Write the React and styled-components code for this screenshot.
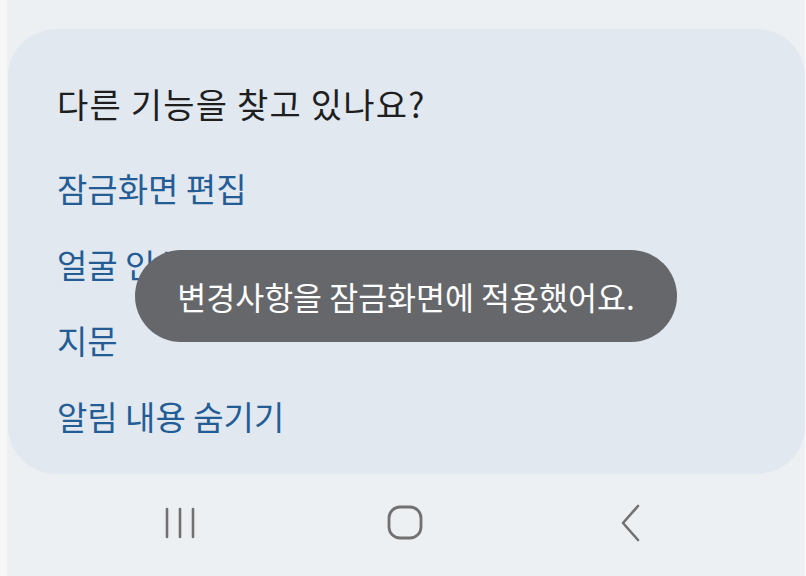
import styled, { createGlobalStyle } from "styled-components";

const GlobalStyle = createGlobalStyle`
  html, body {
    margin: 0;
    padding: 0;
    background: #f7f7f7;
  }
  body {
    font-family: "Noto Sans CJK KR", "Noto Sans", sans-serif;
  }
`;

const links = ["잠금화면 편집", "얼굴 인식", "지문", "알림 내용 숨기기"];

export default function App() {
  return (
    <>
      <GlobalStyle />
      <StyledScreen>
        <StyledCard>
          <StyledTitle>다른 기능을 찾고 있나요?</StyledTitle>
          <StyledLinkList>
            {links.map((label) => (
              <StyledLink key={label}>{label}</StyledLink>
            ))}
          </StyledLinkList>
        </StyledCard>

        <StyledNavBar>
          <StyledNavSlot>
            <svg width="34" height="34" viewBox="0 0 34 34">
              <g stroke="#717171" strokeWidth="2.6" strokeLinecap="round">
                <line x1="3" y1="3" x2="3" y2="31" />
                <line x1="16" y1="3" x2="16" y2="31" />
                <line x1="29" y1="3" x2="29" y2="31" />
              </g>
            </svg>
          </StyledNavSlot>
          <StyledNavSlot>
            <svg width="38" height="36" viewBox="0 0 38 36">
              <rect
                x="2"
                y="2"
                width="32"
                height="31"
                rx="11"
                fill="none"
                stroke="#717171"
                strokeWidth="2.8"
              />
            </svg>
          </StyledNavSlot>
          <StyledNavSlot>
            <svg width="24" height="38" viewBox="0 0 24 38">
              <polyline
                points="19,2 4,19 19,36"
                fill="none"
                stroke="#717171"
                strokeWidth="2.6"
                strokeLinecap="round"
                strokeLinejoin="round"
              />
            </svg>
          </StyledNavSlot>
        </StyledNavBar>

        <StyledToast>변경사항을 잠금화면에 적용했어요.</StyledToast>
      </StyledScreen>
    </>
  );
}

const StyledScreen = styled.div`
  position: relative;
  box-sizing: border-box;
  margin-left: 7px;
  width: 799px;
  height: 576px;
  padding-top: 29px;
  background: #edf0f3;
  border-right: 1px solid #fafafa;
  display: flex;
  flex-direction: column;
`;

const StyledCard = styled.section`
  box-sizing: border-box;
  margin-left: 1px;
  height: 445px;
  padding: 55px 40px 0 49px;
  background: #e1e8f0;
  border-radius: 48px;
`;

const StyledTitle = styled.h2`
  margin: 0;
  height: 40px;
  line-height: 40px;
  font-size: 34px;
  letter-spacing: 1.2px;
  font-weight: 400;
  color: #1e1e1e;
`;

const StyledLinkList = styled.div`
  display: flex;
  flex-direction: column;
  gap: 36px;
  margin-top: 44px;
`;

const StyledLink = styled.a`
  display: block;
  height: 40px;
  line-height: 40px;
  font-size: 33px;
  color: #245d95;
`;

const StyledNavBar = styled.nav`
  flex: 1;
  display: flex;
  justify-content: center;
  align-items: center;
  padding-bottom: 4px;
`;

const StyledNavSlot = styled.div`
  width: 225px;
  display: flex;
  justify-content: center;
  align-items: center;
`;

const StyledToast = styled.div`
  position: absolute;
  top: 250px;
  left: 50%;
  transform: translateX(-50%);
  box-sizing: border-box;
  width: 542px;
  height: 92px;
  border-radius: 46px;
  background: #66676b;
  color: #ffffff;
  font-size: 31.5px;
  display: flex;
  align-items: center;
  justify-content: center;
  white-space: nowrap;
`;
